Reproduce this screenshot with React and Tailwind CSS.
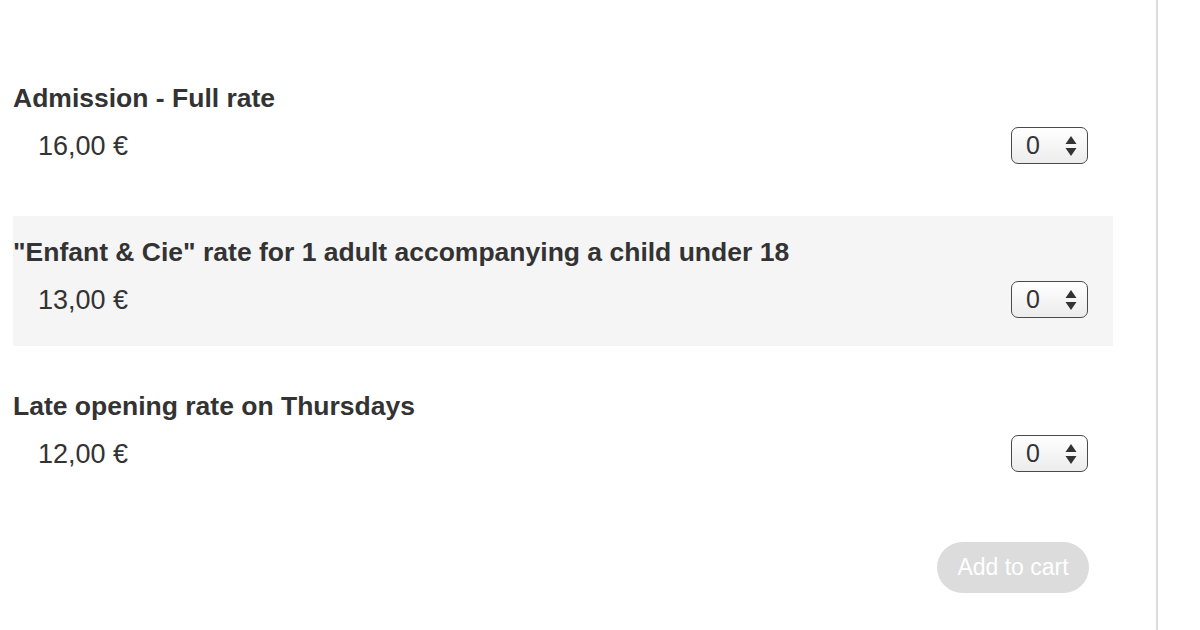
import React from "react";

function Stepper() {
  return (
    <div className="flex h-[37px] w-[77px] items-center justify-between rounded-[7px] border border-[#4a4a4a] bg-gradient-to-b from-[#ffffff] to-[#ececec] pl-[14px] pr-[10px] text-[25px] leading-none text-[#333]">
      <span>0</span>
      <svg width="12" height="22" viewBox="0 0 12 22" className="block">
        <path d="M6 1 L11.5 9 L0.5 9 Z" fill="#333" />
        <path d="M6 21 L11.5 13 L0.5 13 Z" fill="#333" />
      </svg>
    </div>
  );
}

function Row({ title, price, gray }) {
  return (
    <div className={`flex h-[130px] flex-col pt-[21px] ${gray ? "bg-[#f5f5f5]" : ""}`}>
      <div className="text-[26.5px] font-bold leading-[30px] text-[#333]">{title}</div>
      <div className="mt-[14px] flex items-center justify-between pl-[25px] pr-[25px]">
        <span className="text-[27px] leading-[30px] text-[#333]">{price}</span>
        <Stepper />
      </div>
    </div>
  );
}

export default function App() {
  return (
    <div
      className="flex h-[630px] w-[1200px] bg-white"
      style={{ fontFamily: '"Liberation Sans", Arial, sans-serif' }}
    >
      <div className="w-[1156px] pl-[13px] pt-[62px]">
        <div className="flex w-[1100px] flex-col gap-[24px]">
          <Row title="Admission - Full rate" price="16,00 €" />
          <Row title={'"Enfant & Cie" rate for 1 adult accompanying a child under 18'} price="13,00 €" gray />
          <Row title="Late opening rate on Thursdays" price="12,00 €" />
        </div>
        <div className="flex w-[1100px] justify-end pr-[24px] pt-[42px]">
          <button className="h-[51px] w-[152px] rounded-full bg-[#dcdcdc] text-[23px] text-white">
            Add to cart
          </button>
        </div>
      </div>
      <div className="h-full w-[2px] bg-[#dcdcdc]" />
      <div className="flex-1 bg-white" />
    </div>
  );
}
